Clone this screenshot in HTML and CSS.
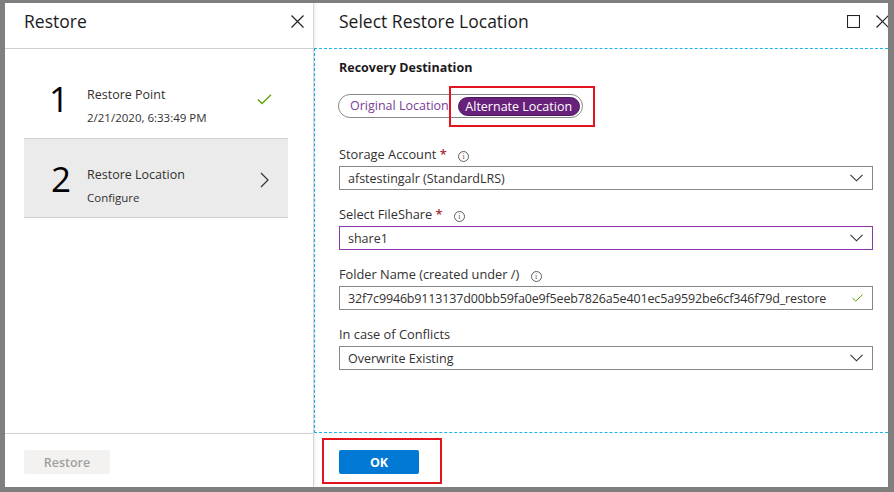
FILE: index.html
```html
<!DOCTYPE html>
<html>
<head>
<meta charset="utf-8">
<link rel="stylesheet" href="styles.css">
</head>
<body>
<div class="window">
  <section class="blade blade-left">
    <header class="blade-head">
      <h1 class="blade-title">Restore</h1>
      <span class="head-icons">
        <svg class="icon-close" width="13" height="13" viewBox="0 0 13 13"><path d="M0.5 0.5L12.5 12.5M12.5 0.5L0.5 12.5" stroke="#222" stroke-width="1.2" fill="none"/></svg>
      </span>
    </header>
    <div class="steps">
      <div class="step">
        <div class="step-num">1</div>
        <div class="step-text">
          <div class="step-name">Restore Point</div>
          <div class="step-sub">2/21/2020, 6:33:49 PM</div>
        </div>
        <svg class="step-icon" width="15" height="11" viewBox="0 0 15 11"><path d="M1 5.5L5 9.5L14 0.8" stroke="#57a300" stroke-width="1.3" fill="none"/></svg>
      </div>
      <div class="step step-active">
        <div class="step-num">2</div>
        <div class="step-text">
          <div class="step-name">Restore Location</div>
          <div class="step-sub">Configure</div>
        </div>
        <svg class="step-icon chev" width="9" height="16" viewBox="0 0 9 16"><path d="M1 1L8 8L1 15" stroke="#323130" stroke-width="1.2" fill="none"/></svg>
      </div>
    </div>
    <footer class="blade-foot">
      <button class="btn btn-disabled">Restore</button>
    </footer>
  </section>

  <section class="blade blade-right">
    <header class="blade-head">
      <h1 class="blade-title">Select Restore Location</h1>
      <span class="head-icons">
        <svg width="13" height="13" viewBox="0 0 13 13"><rect x="0.5" y="0.5" width="12" height="12" stroke="#222" stroke-width="1.1" fill="none"/></svg>
        <svg width="13" height="13" viewBox="0 0 13 13"><path d="M0.5 0.5L12.5 12.5M12.5 0.5L0.5 12.5" stroke="#222" stroke-width="1.2" fill="none"/></svg>
      </span>
    </header>
    <div class="form">
      <div class="section-title">Recovery Destination</div>
      <div class="toggle-row">
        <div class="toggle">
          <span class="opt">Original Location</span>
          <span class="opt opt-on">Alternate Location</span>
        </div>
        <span class="highlight hl-toggle"></span>
      </div>

      <div class="field">
        <label class="label">Storage Account <span class="req">*</span> <span class="info">i</span></label>
        <div class="select"><span>afstestingalr (StandardLRS)</span><svg class="caret" width="13" height="8" viewBox="0 0 13 8"><path d="M0.5 0.8L6.5 6.8L12.5 0.8" stroke="#323130" stroke-width="1.1" fill="none"/></svg></div>
      </div>
      <div class="field">
        <label class="label">Select FileShare <span class="req">*</span> <span class="info">i</span></label>
        <div class="select select-focus"><span>share1</span><svg class="caret" width="13" height="8" viewBox="0 0 13 8"><path d="M0.5 0.8L6.5 6.8L12.5 0.8" stroke="#323130" stroke-width="1.1" fill="none"/></svg></div>
      </div>
      <div class="field">
        <label class="label">Folder Name (created under /) <span class="info">i</span></label>
        <div class="select"><span class="mono-ish">32f7c9946b9113137d00bb59fa0e9f5eeb7826a5e401ec5a9592be6cf346f79d_restore</span><svg class="caret" width="11" height="8" viewBox="0 0 11 8"><path d="M0.5 4L3.8 7.2L10.5 0.6" stroke="#57a300" stroke-width="1" fill="none"/></svg></div>
      </div>
      <div class="field">
        <label class="label">In case of Conflicts</label>
        <div class="select"><span>Overwrite Existing</span><svg class="caret" width="13" height="8" viewBox="0 0 13 8"><path d="M0.5 0.8L6.5 6.8L12.5 0.8" stroke="#323130" stroke-width="1.1" fill="none"/></svg></div>
      </div>
    </div>
    <footer class="blade-foot">
      <button class="btn btn-primary">OK</button>
      <span class="highlight hl-ok"></span>
    </footer>
  </section>
</div>
</body>
</html>
```
FILE: styles.css
```css
* { box-sizing: border-box; }
html, body { margin: 0; padding: 0; }
body {
  width: 894px;
  height: 492px;
  background: #7f7f7f;
  font-family: "Segoe UI", "Open Sans", "Noto Sans", sans-serif;
  color: #323130;
  padding: 3px 6px 5px 5px;
  overflow: hidden;
}
.window {
  width: 883px;
  height: 484px;
  background: #fff;
  display: flex;
  overflow: hidden;
}
.blade {
  display: flex;
  flex-direction: column;
  height: 100%;
}
.blade-left {
  width: 309px;
  border-right: 1px solid #d6d6d6;
  box-shadow: 1px 0 3px rgba(0,0,0,0.08);
  position: relative;
  z-index: 1;
}
.blade-right {
  flex: 1;
  position: relative;
}
.blade-head {
  height: 45px;
  flex: none;
  display: flex;
  align-items: center;
  justify-content: space-between;
  padding: 0 9px 9px 19px;
}
.blade-left .blade-head { border-bottom: 1px solid #cfcfcf; height: 46px; }
.blade-right .blade-head { padding: 0 0 9px 25px; height: 45px; }
.blade-title {
  margin: 0;
  font-size: 17.5px;
  font-weight: 400;
  color: #1b1b1b;
}
.head-icons { display: flex; gap: 16px; align-items: center; margin-top: 1px; }
.blade-right .head-icons { margin-right: -1px; }

.steps { flex: 1; padding: 9px 25px 0 19px; }
.step {
  height: 80px;
  display: flex;
  align-items: center;
  position: relative;
}
.step-active {
  background: #ebebeb;
  border-top: 1px solid #d2d2d2;
  border-bottom: 1px solid #d2d2d2;
}
.step-num {
  width: 63px;
  padding-left: 25px;
  font-size: 35px;
  line-height: 40px;
  color: #000;
  font-weight: 400;
  margin-top: 2px;
}
.step-active .step-num { padding-left: 27px; }
.step-text { flex: 1; align-self: flex-start; padding-top: 27px; }
.step-active .step-text { padding-top: 26px; }
.step-name { font-size: 12.5px; line-height: 20px; color: #323130; }
.step-sub { font-size: 11.5px; line-height: 20px; margin-top: 3px; color: #323130; }
.step-icon { position: absolute; right: 16px; top: 36px; }
.step-icon.chev { right: 19px; top: 33px; }

.blade-foot {
  height: 54px;
  flex: none;
  display: flex;
  align-items: flex-start;
  padding: 16px 19px 0;
  position: relative;
}
.blade-left .blade-foot { border-top: 1px solid #d0d0d0; padding-top: 16px; }
.blade-right .blade-foot { padding-left: 25px; padding-top: 17px; }
.btn {
  height: 24px;
  border: none;
  border-radius: 2px;
  font-family: inherit;
  font-size: 12.5px;
  font-weight: 600;
  padding: 0;
}
.btn-disabled { width: 86px; background: #f3f2f1; color: #a19f9d; }
.btn-primary { width: 80px; background: #0078d4; color: #fff; font-weight: 700; }

.form {
  flex: 1;
  border-top: 1px dashed #1ab4ea;
  border-left: 1px dashed #1ab4ea;
  border-bottom: 1px dashed #1ab4ea;
  padding: 9px 15px 0 24px;
}
.section-title { font-size: 12.5px; font-weight: 700; line-height: 20px; color: #1b1b1b; }
.toggle-row { position: relative; margin-top: 15px; height: 24px; }
.toggle {
  display: inline-flex;
  align-items: center;
  height: 24px;
  border: 1px solid #8a8886;
  border-radius: 12px;
  padding: 0 2px 0 11px;
  margin-left: -1px;
  gap: 9px;
}
.opt { font-size: 12.5px; color: #7a3d95; line-height: 18px; white-space: nowrap; }
.opt-on {
  background: #68217a;
  color: #fff;
  border-radius: 10px;
  height: 19px;
  padding: 0;
  width: 122px;
  text-align: center;
  border: 1px solid #4b1760;
}
.highlight {
  position: absolute;
  border: 2px solid #e3131f;
  pointer-events: none;
}
.hl-toggle { left: 110px; top: -7px; width: 146px; height: 41px; }
.hl-ok { left: 8px; top: 5px; width: 120px; height: 46px; }

.field { margin-top: 27px; }
.field + .field { margin-top: 14px; }
.label {
  display: block;
  font-size: 12.8px;
  line-height: 20px;
  color: #323130;
  margin-bottom: 2px;
}
.req { color: #a4262c; font-weight: 600; }
.info {
  display: inline-block;
  width: 11px;
  height: 11px;
  border: 1px solid #605e5c;
  border-radius: 50%;
  font-size: 8px;
  line-height: 9px;
  text-align: center;
  color: #605e5c;
  margin-left: 8px;
  vertical-align: 0px;
  font-family: "Liberation Serif", serif;
}
.select {
  height: 24px;
  border: 1px solid #8a8886;
  display: flex;
  align-items: center;
  justify-content: space-between;
  padding: 0 9px 0 8px;
  font-size: 12.5px;
  color: #323130;
  white-space: nowrap;
}
.select-focus { border-color: #8d36aa; }
.mono-ish { letter-spacing: -0.15px; }
.caret { flex: none; }
```
